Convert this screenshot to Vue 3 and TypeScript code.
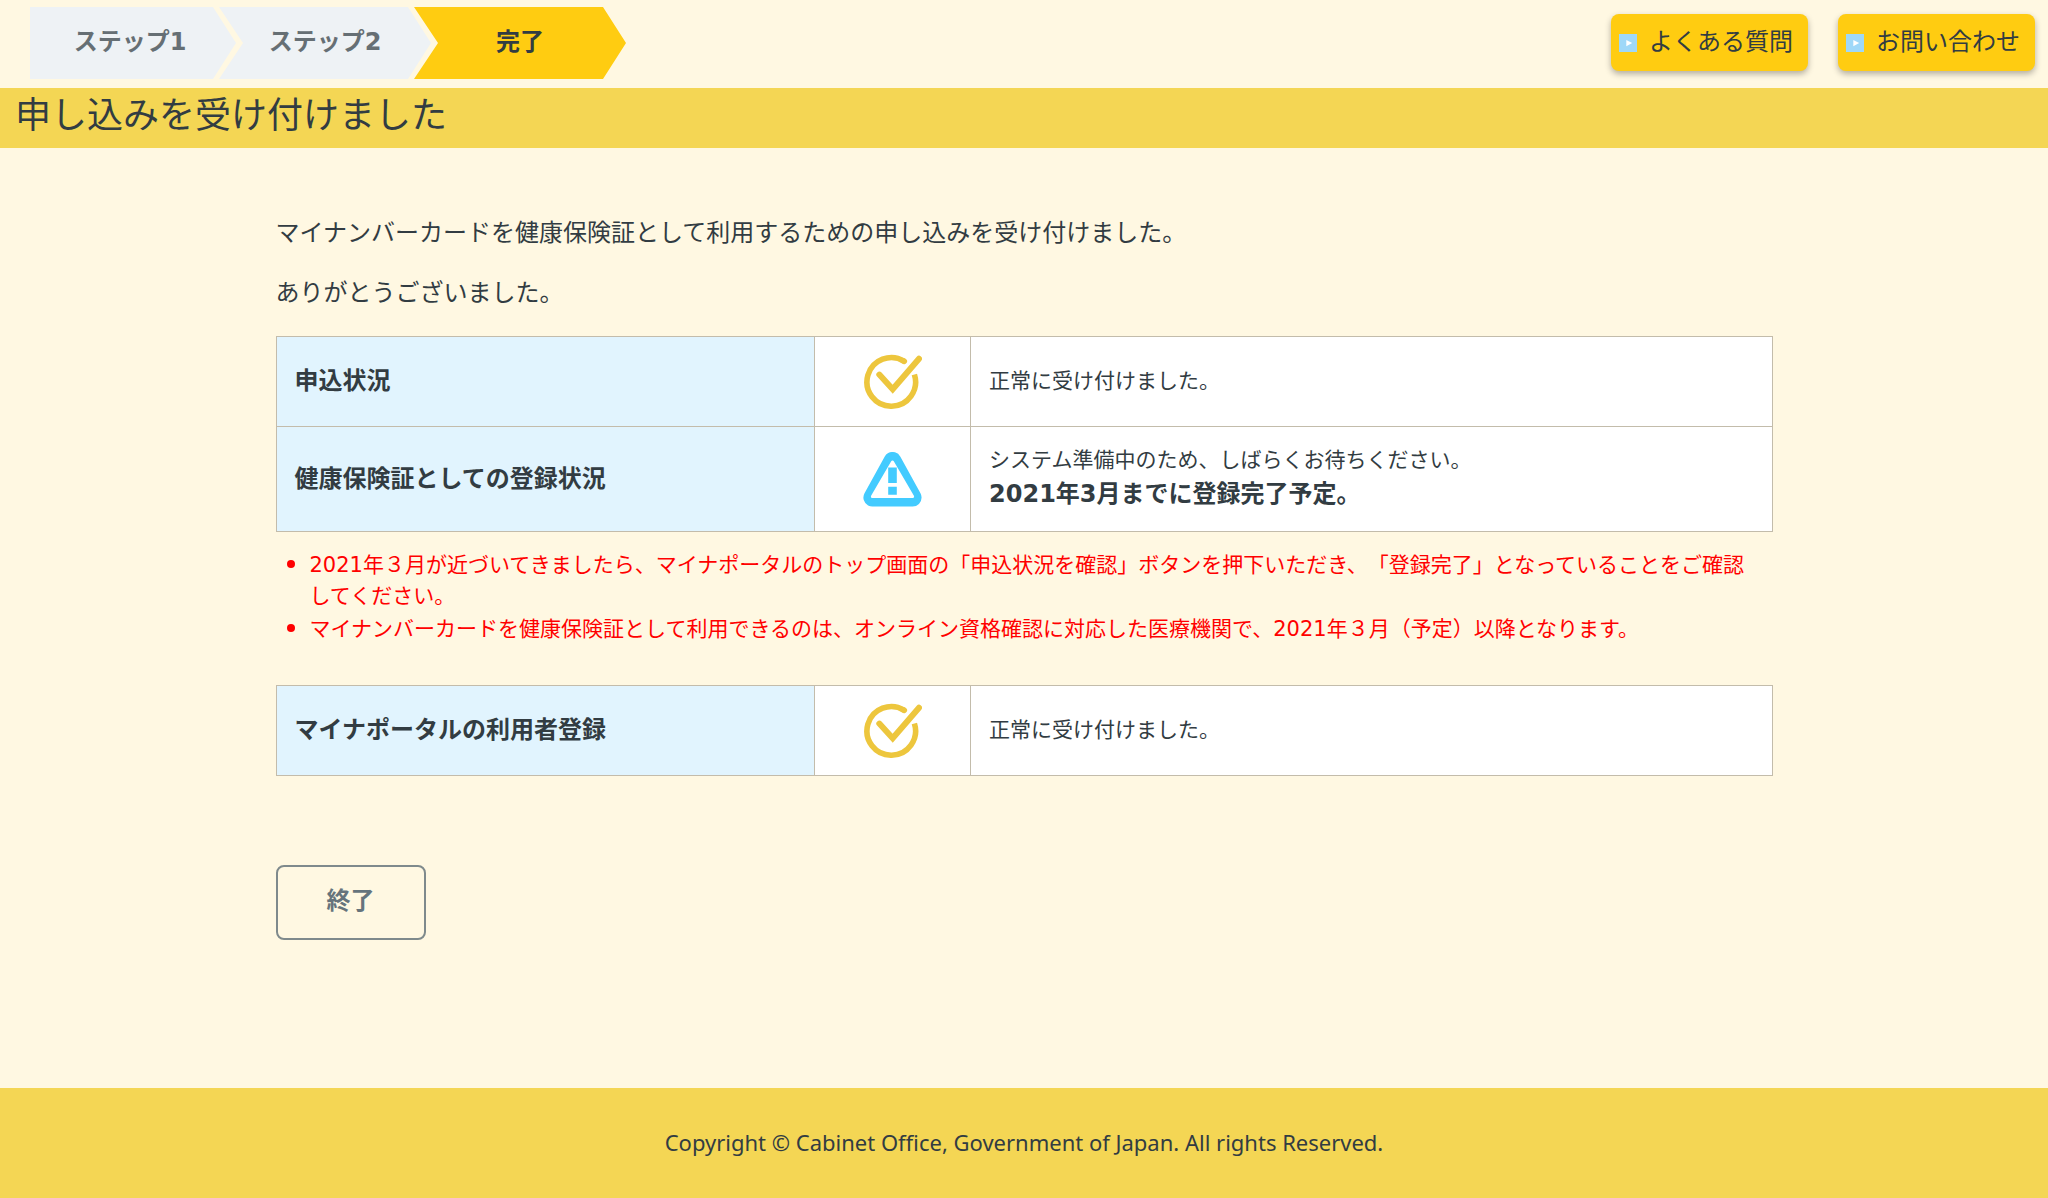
<script setup lang="ts">
type Status = 'done' | 'pending'

interface Row {
  label: string
  status: Status
  message: string
  emphasis?: string
}

const steps: string[] = ['ステップ1', 'ステップ2', '完了']
const currentStep = 2

const links: string[] = ['よくある質問', 'お問い合わせ']

const paragraphs: string[] = [
  'マイナンバーカードを健康保険証として利用するための申し込みを受け付けました。',
  'ありがとうございました。',
]

const notes: string[] = [
  '2021年３月が近づいてきましたら、マイナポータルのトップ画面の「申込状況を確認」ボタンを押下いただき、「登録完了」となっていることをご確認してください。',
  'マイナンバーカードを健康保険証として利用できるのは、オンライン資格確認に対応した医療機関で、2021年３月（予定）以降となります。',
]

const tables: { rows: Row[]; notes: string[] }[] = [
  {
    rows: [
      { label: '申込状況', status: 'done', message: '正常に受け付けました。' },
      {
        label: '健康保険証としての登録状況',
        status: 'pending',
        message: 'システム準備中のため、しばらくお待ちください。',
        emphasis: '2021年3月までに登録完了予定。',
      },
    ],
    notes,
  },
  {
    rows: [{ label: 'マイナポータルの利用者登録', status: 'done', message: '正常に受け付けました。' }],
    notes: [],
  },
]
</script>

<template>
  <div class="page">
    <header class="header">
      <ol class="steps">
        <li
          v-for="(step, i) in steps"
          :key="step"
          class="step"
          :class="{ current: i === currentStep }"
          :aria-current="i === currentStep ? 'step' : undefined"
        >
          {{ step }}
        </li>
      </ol>
      <nav class="links">
        <a v-for="link in links" :key="link" href="#" class="link">
          <svg class="link-icon" viewBox="0 0 18 18" aria-hidden="true">
            <rect width="18" height="18" fill="#9fd8f8" />
            <path d="M7.3 6 L13.2 9 L7.3 12.3 Z" fill="#fff" />
          </svg>
          <span class="link-text">{{ link }}</span>
        </a>
      </nav>
    </header>

    <h1 class="title">申し込みを受け付けました</h1>

    <main class="content">
      <p v-for="p in paragraphs" :key="p" class="lead">{{ p }}</p>

      <section v-for="(table, t) in tables" :key="t" class="group">
        <table class="status">
          <colgroup>
            <col class="col-label" />
            <col class="col-icon" />
            <col />
          </colgroup>
          <tbody>
            <tr v-for="row in table.rows" :key="row.label" :class="{ tall: row.emphasis }">
              <th scope="row">{{ row.label }}</th>
              <td class="icon-cell">
                <svg v-if="row.status === 'done'" class="icon" viewBox="0 0 59 55" role="img" aria-label="完了">
                  <g fill="none" stroke="#edc63d" stroke-linecap="round">
                    <path d="M41.3 7.4 A24.3 24.3 0 1 0 51.4 20.5" stroke-width="5.6" stroke-linecap="butt" />
                    <path d="M41.3 7.4 L40 6.6" stroke-width="5.6" />
                    <path d="M16.3 20.6 L29.7 35.3 L56 4.8" stroke-width="6" stroke-linejoin="miter" />
                  </g>
                </svg>
                <svg v-else class="icon" viewBox="0 0 59 55" role="img" aria-label="準備中">
                  <path
                    d="M29.5 9 L9.4 45.6 H49.6 Z"
                    fill="#43cbff"
                    stroke="#43cbff"
                    stroke-width="18"
                    stroke-linejoin="round"
                  />
                  <path
                    d="M29.5 10 L9.4 44.6 H49.6 Z"
                    fill="#fff"
                    stroke="#fff"
                    stroke-width="3"
                    stroke-linejoin="round"
                  />
                  <path d="M25.2 15.4 h8.6 v15.6 h-8.6 Z M25.2 34.8 h8.6 v8 h-8.6 Z" fill="#43cbff" />
                </svg>
              </td>
              <td class="message">
                {{ row.message }}
                <strong v-if="row.emphasis">{{ row.emphasis }}</strong>
              </td>
            </tr>
          </tbody>
        </table>
        <ul v-if="table.notes.length" class="notes">
          <li v-for="note in table.notes" :key="note">{{ note }}</li>
        </ul>
      </section>

      <button type="button" class="finish">終了</button>
    </main>

    <footer class="footer">Copyright © Cabinet Office, Government of Japan. All rights Reserved.</footer>
  </div>
</template>

<style>
body {
  margin: 0;
  background: #fff8e2;
}
</style>

<style scoped>
.page {
  display: flex;
  flex-direction: column;
  min-height: 100vh;
  color: #323c42;
  background: #fff8e2;
  font-family: 'DejaVu Sans', 'Noto Sans CJK JP', sans-serif;
  font-size: 24px;
  line-height: 36px;
  text-spacing-trim: space-all;
}

.header {
  display: flex;
  justify-content: space-between;
  align-items: flex-start;
  padding: 7px 13px 9px 30px;
}

.steps {
  display: flex;
  margin: 0;
  padding: 0;
  list-style: none;
}

.step {
  box-sizing: border-box;
  width: 212px;
  height: 72px;
  margin-left: -17px;
  padding-bottom: 2px;
  display: flex;
  align-items: center;
  justify-content: center;
  color: #666f74;
  background: #eef2f5;
  font-weight: 700;
  clip-path: polygon(0 0, 189px 0, 100% 50%, 189px 100%, 0 100%, 24px 50%);
}

.step:first-child {
  width: 206px;
  margin-left: 0;
  padding-right: 6px;
  clip-path: polygon(0 0, 183px 0, 100% 50%, 183px 100%, 0 100%);
}

.step.current {
  color: #323c42;
  background: #ffcc11;
}

.links {
  display: flex;
  gap: 30px;
  padding-top: 7px;
}

.link {
  display: flex;
  align-items: center;
  gap: 12px;
  height: 57px;
  padding: 0 15px 0 8px;
  color: #323c42;
  background: #ffcc11;
  border-radius: 8px;
  box-shadow: 0 3px 6px rgba(0, 0, 0, 0.3);
  text-decoration: none;
}

.link-icon {
  width: 18px;
  height: 18px;
}

.link-text {
  padding-bottom: 2px;
}

.title {
  margin: 0;
  padding: 1px 15px 5px;
  background: #f4d654;
  font-size: 36px;
  line-height: 54px;
  font-weight: 400;
}

.content {
  box-sizing: border-box;
  width: 100%;
  max-width: 1497px;
  margin: 0 auto;
  padding: 67px 0 140px;
}

.lead {
  margin: 0 0 24px;
}

.lead + .group {
  margin-top: 25px;
}

.status {
  width: 100%;
  table-layout: fixed;
  border-collapse: collapse;
  background: #fff;
}

.col-label {
  width: 36%;
}

.col-icon {
  width: 156px;
}

.status th,
.status td {
  height: 90px;
  padding: 0 18px 1px;
  border: 1px solid #c3bcab;
  text-align: left;
  box-sizing: border-box;
}

.status .tall th,
.status .tall td {
  height: 105px;
}

.status th {
  background: #e1f4fe;
  font-weight: 700;
}

.status .icon-cell {
  padding: 0;
  text-align: center;
}

.icon {
  display: block;
  width: 59px;
  height: 55px;
  margin: 0 auto;
}

.message {
  font-size: 21px;
  line-height: 31px;
}

.message strong {
  display: block;
  font-size: 24px;
  line-height: 36px;
}

.notes {
  margin: 16px 0 40px;
  padding: 0 18px 0 34px;
  color: #ff0000;
  font-size: 21px;
  line-height: 31px;
}

.notes li::marker {
  font-size: 26px;
}

.finish {
  display: block;
  width: 150px;
  height: 75px;
  margin-top: 89px;
  padding: 0 0 4px;
  color: #66747c;
  background: transparent;
  border: 2px solid #7f8a8c;
  border-radius: 8px;
  font: inherit;
  font-weight: 700;
}

.footer {
  margin-top: auto;
  padding: 36px 16px 38px;
  background: #f4d654;
  font-family: 'Noto Sans', sans-serif;
  font-size: 22px;
  text-align: center;
}
</style>
